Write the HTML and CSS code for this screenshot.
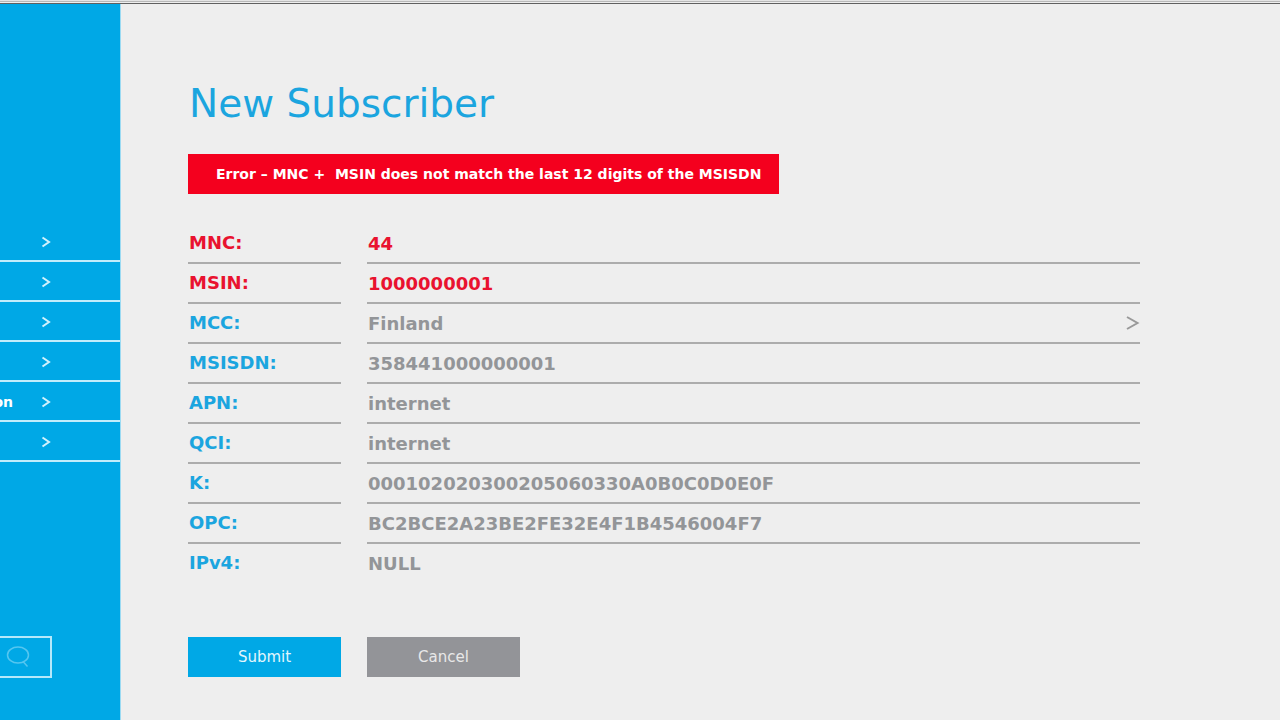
FILE: index.html
```html
<!DOCTYPE html>
<html lang="en">
<head>
<meta charset="utf-8">
<title>New Subscriber</title>
<link rel="stylesheet" href="styles.css">
</head>
<body>
<div class="topbar"></div>
<div class="layout">
  <aside class="sidebar">
    <nav class="menu">
      <a class="menu-item" href="#"><span class="menu-text"></span><svg class="menu-arrow" viewBox="0 0 10 12"><path d="M1.500 1.500L8 6L1.500 10.500"/></svg></a>
      <a class="menu-item" href="#"><span class="menu-text"></span><svg class="menu-arrow" viewBox="0 0 10 12"><path d="M1.500 1.500L8 6L1.500 10.500"/></svg></a>
      <a class="menu-item" href="#"><span class="menu-text"></span><svg class="menu-arrow" viewBox="0 0 10 12"><path d="M1.500 1.500L8 6L1.500 10.500"/></svg></a>
      <a class="menu-item" href="#"><span class="menu-text"></span><svg class="menu-arrow" viewBox="0 0 10 12"><path d="M1.500 1.500L8 6L1.500 10.500"/></svg></a>
      <a class="menu-item" href="#"><span class="menu-text">on</span><svg class="menu-arrow" viewBox="0 0 10 12"><path d="M1.500 1.500L8 6L1.500 10.500"/></svg></a>
      <a class="menu-item" href="#"><span class="menu-text"></span><svg class="menu-arrow" viewBox="0 0 10 12"><path d="M1.500 1.500L8 6L1.500 10.500"/></svg></a>
    </nav>
    <button class="search" type="button">
      <svg class="search-icon" viewBox="0 0 24 22"><ellipse cx="12" cy="9" rx="10.500" ry="8"/><path d="M17 15.500L21.500 20.500"/></svg>
    </button>
  </aside>
  <main class="content">
    <h1 class="title">New Subscriber</h1>
    <p class="alert" role="alert">Error – MNC +&nbsp; MSIN does not match the last 12 digits of the MSISDN</p>
    <form class="form">
      <div class="row row-error"><label class="label" for="mnc">MNC:</label><div class="cell"><input class="field" id="mnc" type="text" value="44"></div></div>
      <div class="row row-error"><label class="label" for="msin">MSIN:</label><div class="cell"><input class="field" id="msin" type="text" value="1000000001"></div></div>
      <div class="row"><label class="label" for="mcc">MCC:</label><div class="cell"><select class="field" id="mcc"><option>Finland</option></select><svg class="field-arrow" viewBox="0 0 14 16"><path d="M1 2L11.500 8L1 14"/></svg></div></div>
      <div class="row"><label class="label" for="msisdn">MSISDN:</label><div class="cell"><input class="field" id="msisdn" type="text" value="358441000000001"></div></div>
      <div class="row"><label class="label" for="apn">APN:</label><div class="cell"><input class="field" id="apn" type="text" value="internet"></div></div>
      <div class="row"><label class="label" for="qci">QCI:</label><div class="cell"><input class="field" id="qci" type="text" value="internet"></div></div>
      <div class="row"><label class="label" for="k">K:</label><div class="cell"><input class="field" id="k" type="text" value="000102020300205060330A0B0C0D0E0F"></div></div>
      <div class="row"><label class="label" for="opc">OPC:</label><div class="cell"><input class="field" id="opc" type="text" value="BC2BCE2A23BE2FE32E4F1B4546004F7"></div></div>
      <div class="row"><label class="label" for="ipv4">IPv4:</label><div class="cell"><input class="field" id="ipv4" type="text" value="NULL"></div></div>
      <div class="actions">
        <button class="button" type="submit">Submit</button>
        <button class="button button-cancel" type="button">Cancel</button>
      </div>
    </form>
  </main>
</div>
</body>
</html>
```
FILE: styles.css
```css
* { box-sizing: border-box; }

body {
  margin: 0;
  min-height: 100vh;
  display: flex;
  flex-direction: column;
  background: #eeeeee;
  font-family: "DejaVu Sans", sans-serif;
}

.topbar {
  height: 4px;
  background: linear-gradient(#e4e4e4 0 1px, #b8b8b8 1px 2px, #eeeeee 2px 3px, #606060 3px);
}

.layout {
  flex: 1;
  display: grid;
  grid-template-columns: 121px 1fr;
}

.sidebar {
  background: #00a8e6;
  border-right: 1px solid #9bdaf2;
  padding-top: 218px;
}

.menu-item {
  display: flex;
  align-items: center;
  gap: 28px;
  height: 40px;
  padding-top: 2px;
  border-bottom: 2px solid #c2ecfb;
  text-decoration: none;
}

.menu-text {
  display: flex;
  justify-content: flex-end;
  width: 13px;
  overflow: hidden;
  color: #ffffff;
  font-size: 14px;
  font-weight: bold;
}

.menu-arrow {
  width: 10px;
  height: 12px;
  fill: none;
  stroke: #d2f2fd;
  stroke-width: 2;
}

.search {
  display: flex;
  align-items: center;
  width: 52px;
  height: 42px;
  margin: 174px 0 0;
  padding: 0 0 0 6px;
  border: 2px solid #b5e8fa;
  border-left: 0;
  background: transparent;
}

.search-icon {
  width: 24px;
  height: 22px;
  fill: none;
  stroke: #55c6f0;
  stroke-width: 1.500;
}

.content {
  padding: 80px 140px 40px 67px;
}

.title {
  margin: 0;
  padding-left: 1px;
  color: #1ba5df;
  font-size: 39px;
  font-weight: normal;
  line-height: 40px;
}

.alert {
  width: fit-content;
  margin: 30px 0;
  padding: 0 18px 0 28px;
  background: #f4001e;
  color: #ffffff;
  font-size: 14px;
  font-weight: bold;
  line-height: 40px;
}

.row {
  display: grid;
  grid-template-columns: 153px 1fr;
  column-gap: 26px;
  height: 40px;
  color: #939598;
}

.label,
.cell {
  border-bottom: 2px solid #acacac;
}

.row:nth-child(9) > * {
  border-bottom-color: transparent;
}

.label {
  padding-left: 1px;
  color: #1ba5df;
  font-size: 18px;
  font-weight: bold;
  line-height: 38px;
}

.row-error,
.row-error .label {
  color: #e9122f;
}

.cell {
  display: flex;
  align-items: center;
}

.field {
  flex: 1;
  min-width: 0;
  height: 38px;
  margin: 0;
  padding: 0 0 0 1px;
  border: 0;
  outline: 0;
  appearance: none;
  background: transparent;
  color: inherit;
  font: bold 18px "DejaVu Sans", sans-serif;
}

.field-arrow {
  width: 14px;
  height: 16px;
  fill: none;
  stroke: #999999;
  stroke-width: 2;
  pointer-events: none;
}

.actions {
  display: flex;
  gap: 26px;
  margin-top: 53px;
}

.button {
  width: 153px;
  height: 40px;
  border: 0;
  background: #00a8e6;
  color: #e2f6fd;
  font: 15px "DejaVu Sans", sans-serif;
}

.button-cancel {
  background: #939498;
  color: #e8e8e8;
}
```
